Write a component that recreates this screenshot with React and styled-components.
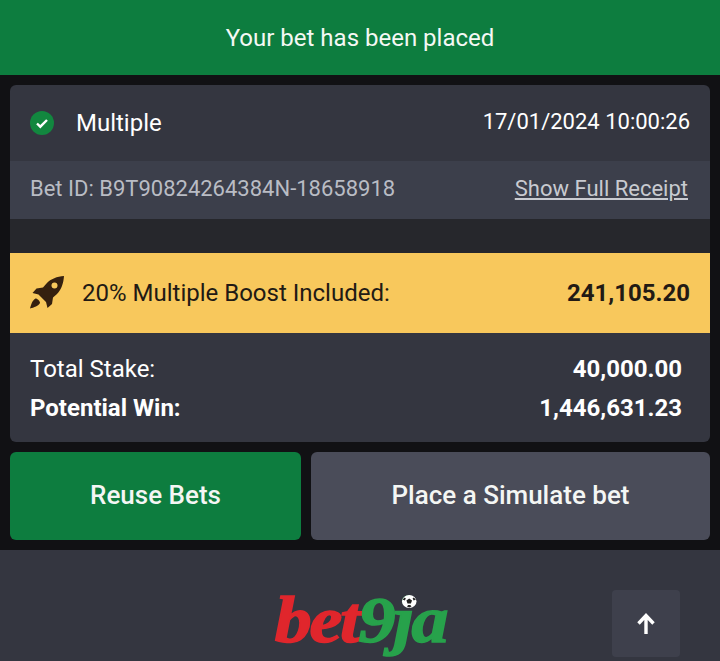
import React from "react";
import styled, { createGlobalStyle } from "styled-components";

const Global = createGlobalStyle`
  html, body {
    margin: 0;
    padding: 0;
    background: #111114;
    font-family: Roboto, "Liberation Sans", sans-serif;
  }
`;

const Page = styled.div`
  width: 720px;
  height: 661px;
  overflow: hidden;
  display: flex;
  flex-direction: column;
  background: #111114;
`;
const Banner = styled.div`
  height: 75px;
  background: #0d7d3f;
  color: #f4f8f4;
  font-size: 24px;
  display: flex;
  align-items: center;
  justify-content: center;
`;
const Content = styled.div`
  padding: 10px 10px;
  display: flex;
  flex-direction: column;
  gap: 10px;
`;
const Card = styled.div`
  background: #343640;
  border-radius: 6px;
  overflow: hidden;
`;
const TopRow = styled.div`
  height: 76px;
  padding: 0 20px;
  display: flex;
  align-items: center;
  justify-content: space-between;
  color: #fff;
`;
const BetType = styled.div`
  display: flex;
  align-items: center;
  gap: 22px;
  font-size: 24px;
`;
const DateText = styled.div`
  font-size: 22px;
  margin-top: -4px;
`;
const IdRow = styled.div`
  height: 58px;
  padding: 0 22px 4px 20px;
  box-sizing: border-box;
  background: #3c3f4b;
  color: #b9bcc4;
  font-size: 22px;
  display: flex;
  align-items: center;
  justify-content: space-between;
`;
const ReceiptLink = styled.a`
  color: #c8cad0;
  text-decoration: underline;
  text-underline-offset: 2px;
`;
const Spacer = styled.div`
  height: 34px;
  background: #26272c;
`;
const BoostRow = styled.div`
  height: 80px;
  padding: 0 20px 0 19px;
  background: #f8c85c;
  color: #221a14;
  font-size: 24px;
  display: flex;
  align-items: center;
`;
const BoostLabel = styled.span`
  margin-left: 17px;
  flex: 1;
`;
const BoostValue = styled.span`
  font-weight: 700;
  font-size: 24px;
`;
const Totals = styled.div`
  height: 109px;
  box-sizing: border-box;
  padding: 21px 28px 0 20px;
  display: flex;
  flex-direction: column;
  gap: 9px;
  color: #fff;
`;
const TotalRow = styled.div`
  display: flex;
  justify-content: space-between;
  font-size: 24px;
  line-height: 30px;
  font-weight: ${(p) => (p.$strong ? 700 : 400)};
`;
const Value = styled.span`
  font-weight: 700;
`;
const Buttons = styled.div`
  display: flex;
  gap: 10px;
`;
const ActionButton = styled.button`
  height: 88px;
  flex: ${(p) => p.$flex};
  border: none;
  border-radius: 6px;
  padding: 0 0 2px;
  background: ${(p) => p.$bg};
  color: #f4f6f4;
  font-family: inherit;
  font-size: 26px;
  font-weight: 500;
`;
const Footer = styled.div`
  flex: 1;
  background: #343640;
  position: relative;
  display: flex;
  justify-content: center;
`;
const Logo = styled.div`
  margin-top: 40px;
  position: relative;
  height: 60px;
  font-family: "Liberation Serif", serif;
  font-style: italic;
  font-weight: 700;
  font-size: 66px;
  line-height: 60px;
  letter-spacing: -2px;
  -webkit-text-stroke: 1.500px currentColor;
  transform: scaleX(1.12);
`;
const LogoRed = styled.span`
  color: #e0262c;
`;
const LogoGreen = styled.span`
  color: #27a24b;
`;
const Ball = styled.svg`
  position: absolute;
  top: 4px;
  right: 26px;
  width: 14px;
  height: 15px;
`;
const TopButton = styled.button`
  position: absolute;
  top: 40px;
  right: 40px;
  width: 68px;
  height: 67px;
  border: none;
  border-radius: 4px;
  background: #3e404c;
  display: flex;
  align-items: center;
  justify-content: center;
  padding: 0;
`;

const CheckBadge = () => (
  <svg width="24" height="24" viewBox="0 0 24 24">
    <circle cx="12" cy="12" r="12" fill="#12873f" />
    <path d="M7 12.5l3.3 3.2L17 9" fill="none" stroke="#fff" strokeWidth="2.4" />
  </svg>
);

const Rocket = () => (
  <svg width="36" height="36" viewBox="0 0 36 36">
    <path
      fill="#35200f"
      d="M35 1c-7 .6-13 2.6-17.500 7.500L14 12.500l-6.500 1L3.500 18l6 1.500 7.500 7.500 1.500 6 4.500-4 1-6.500 4-3.500C32.500 14.500 34.500 8 35 1z"
    />
    <circle cx="25.500" cy="10.500" r="3" fill="#f8c85c" />
    <path fill="#35200f" d="M6.500 23.500c2 0 4.500 2.500 4.500 4.500-1.500 3-6 4.500-10 5.500 1-4 2.500-8.500 5.500-10z" />
  </svg>
);

const ArrowUp = () => (
  <svg width="20" height="24" viewBox="0 0 20 24">
    <path d="M10 22V4M2.500 11.500L10 3.500l7.500 8" fill="none" stroke="#fff" strokeWidth="3.400" />
  </svg>
);

const App = () => (
  <Page>
    <Global />
    <Banner>Your bet has been placed</Banner>
    <Content>
      <Card>
        <TopRow>
          <BetType>
            <CheckBadge />
            Multiple
          </BetType>
          <DateText>17/01/2024 10:00:26</DateText>
        </TopRow>
        <IdRow>
          <span>Bet ID: B9T90824264384N-18658918</span>
          <ReceiptLink>Show Full Receipt</ReceiptLink>
        </IdRow>
        <Spacer />
        <BoostRow>
          <Rocket />
          <BoostLabel>20% Multiple Boost Included:</BoostLabel>
          <BoostValue>241,105.20</BoostValue>
        </BoostRow>
        <Totals>
          <TotalRow>
            <span>Total Stake:</span>
            <Value>40,000.00</Value>
          </TotalRow>
          <TotalRow $strong>
            <span>Potential Win:</span>
            <Value>1,446,631.23</Value>
          </TotalRow>
        </Totals>
      </Card>
      <Buttons>
        <ActionButton $flex="0 0 291px" $bg="#0d7d3f">Reuse Bets</ActionButton>
        <ActionButton $flex="1" $bg="#4a4c59">Place a Simulate bet</ActionButton>
      </Buttons>
    </Content>
    <Footer>
      <Logo>
        <LogoRed>bet</LogoRed>
        <LogoGreen>9ja</LogoGreen>
        <Ball viewBox="0 0 14 14">
          <circle cx="7" cy="7" r="6.500" fill="#fff" />
          <path d="M7 4l2.500 2-1 3h-3l-1-3zM1 5l2-2 1 1-1 2zM13 5l-2-2-1 1 1 2zM5 12l2 1 2-1-1-1.500H6z" fill="#222" />
        </Ball>
      </Logo>
      <TopButton aria-label="Back to top">
        <ArrowUp />
      </TopButton>
    </Footer>
  </Page>
);

export default App;
